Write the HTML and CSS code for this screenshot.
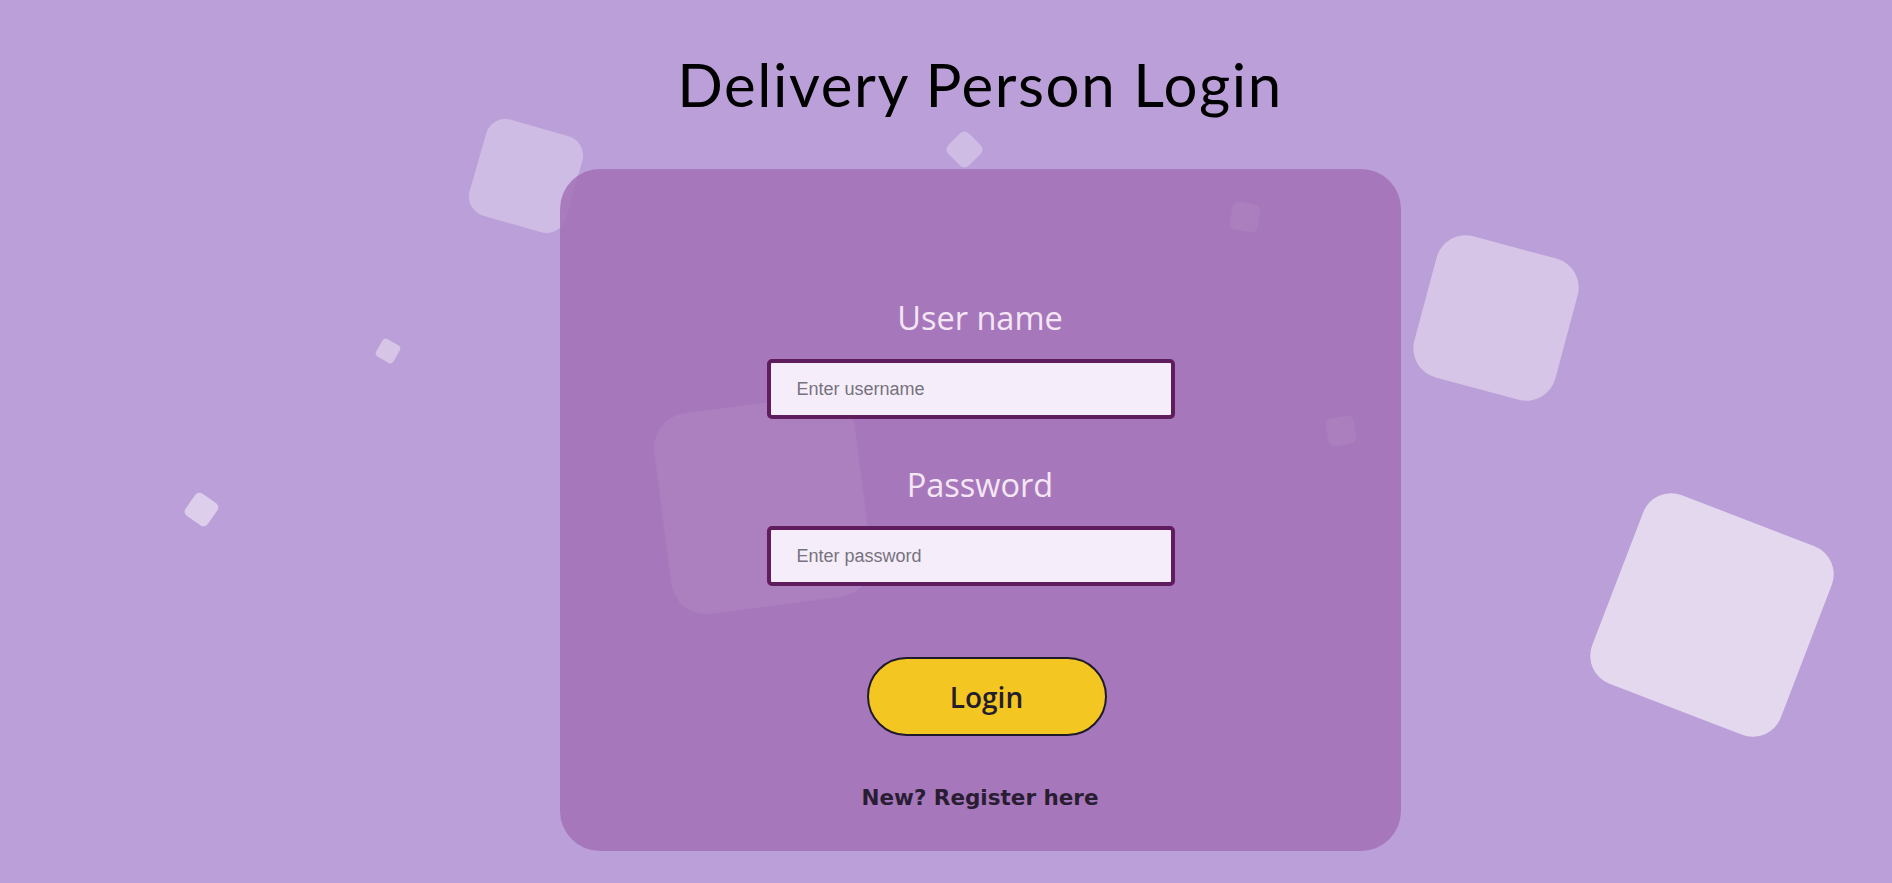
FILE: index.html
```html
<!DOCTYPE html>
<html lang="en">
<head>
<meta charset="utf-8">
<title>Delivery Person Login</title>
<link rel="stylesheet" href="styles.css">
</head>
<body>
<div class="bg-shapes" aria-hidden="true">
  <span class="sq sq-a"></span>
  <span class="sq sq-b"></span>
  <span class="sq sq-c"></span>
  <span class="sq sq-d"></span>
  <span class="sq sq-e"></span>
  <span class="sq sq-f"></span>
  <span class="sq sq-g"></span>
  <span class="sq sq-h"></span>
  <span class="sq sq-i"></span>
</div>
<main class="page">
  <h1 class="title">Delivery Person Login</h1>
  <form class="card">
    <label class="field-label" for="username">User name</label>
    <input class="field-input" id="username" type="text" placeholder="Enter username">
    <label class="field-label field-label--second" for="password">Password</label>
    <input class="field-input" id="password" type="password" placeholder="Enter password">
    <button class="login-btn" type="button">Login</button>
    <a class="register-link" href="#">New? Register here</a>
  </form>
</main>
</body>
</html>
```

FILE: styles.css
```css
html, body {
  margin: 0;
  padding: 0;
}

body {
  background: #bb9fd8;
  width: 1892px;
  height: 883px;
  overflow: hidden;
  position: relative;
}

.bg-shapes {
  position: absolute;
  inset: 0;
  z-index: 0;
}

.sq {
  position: absolute;
  display: block;
  background: rgba(255, 255, 255, 0.3);
}

.sq-a { left: 476px; top: 126px; width: 100px; height: 100px; border-radius: 20px; transform: rotate(16deg); background: rgba(255,255,255,0.3); }
.sq-b { left: 950px; top: 135px; width: 29px; height: 29px; border-radius: 6px; transform: rotate(45deg); background: rgba(255,255,255,0.3); }
.sq-c { left: 1423px; top: 245px; width: 146px; height: 146px; border-radius: 30px; transform: rotate(15deg); background: rgba(255,255,255,0.4); }
.sq-d { left: 1611px; top: 514px; width: 202px; height: 202px; border-radius: 30px; transform: rotate(21deg); background: rgba(255,255,255,0.6); }
.sq-e { left: 378px; top: 341px; width: 20px; height: 20px; border-radius: 4px; transform: rotate(30deg); background: rgba(255,255,255,0.4); }
.sq-f { left: 188px; top: 496px; width: 27px; height: 27px; border-radius: 5px; transform: rotate(35deg); background: rgba(255,255,255,0.5); }
.sq-g { left: 662px; top: 404px; width: 202px; height: 202px; border-radius: 35px; transform: rotate(-7.4deg); background: rgba(255,255,255,0.6); }
.sq-h { left: 1231px; top: 203px; width: 28px; height: 28px; border-radius: 6px; transform: rotate(10deg); background: rgba(255,255,255,0.45); }
.sq-i { left: 1327px; top: 417px; width: 28px; height: 28px; border-radius: 6px; transform: rotate(-10deg); background: rgba(255,255,255,0.45); }

.page {
  position: relative;
  z-index: 1;
  display: flex;
  flex-direction: column;
  align-items: center;
  padding: 54px 0 0 68px;
}

.title {
  margin: 0;
  font-family: Lato, "Open Sans", sans-serif;
  font-weight: 400;
  font-size: 60px;
  line-height: 60px;
  letter-spacing: 1.6px;
  color: #000;
}

.card {
  margin-top: 55px;
  box-sizing: border-box;
  width: 841px;
  height: 682px;
  padding-top: 131px;
  border-radius: 40px;
  background: rgba(162, 113, 182, 0.85);
  display: flex;
  flex-direction: column;
  align-items: center;
}

.field-label {
  font-family: "Open Sans", sans-serif;
  font-size: 32.5px;
  line-height: 36px;
  color: #f5e6f5;
}

.field-label--second {
  margin-top: 48px;
}

.field-input {
  margin-top: 23px;
  margin-right: 19px;
  box-sizing: border-box;
  width: 408px;
  height: 60px;
  border: 4px solid #5f1d5e;
  border-radius: 5px;
  background: #f5eefa;
  padding: 0 0 0 26px;
  font-family: "Liberation Sans", Arial, sans-serif;
  font-size: 18px;
  color: #333;
  outline: none;
}

.field-input::placeholder {
  color: #77727e;
}

.login-btn {
  margin-top: 71px;
  margin-left: 13px;
  box-sizing: border-box;
  width: 240px;
  height: 79px;
  border: 2px solid #1f1a2b;
  border-radius: 40px;
  background: #f4c622;
  font-family: "Open Sans", sans-serif;
  font-weight: 600;
  font-size: 28px;
  color: #241d2e;
  padding: 0;
  cursor: pointer;
}

.register-link {
  margin-top: 49px;
  font-family: "DejaVu Sans", Verdana, sans-serif;
  font-weight: 700;
  font-size: 21.5px;
  line-height: 25px;
  color: #2a1d33;
  text-decoration: none;
}
```
